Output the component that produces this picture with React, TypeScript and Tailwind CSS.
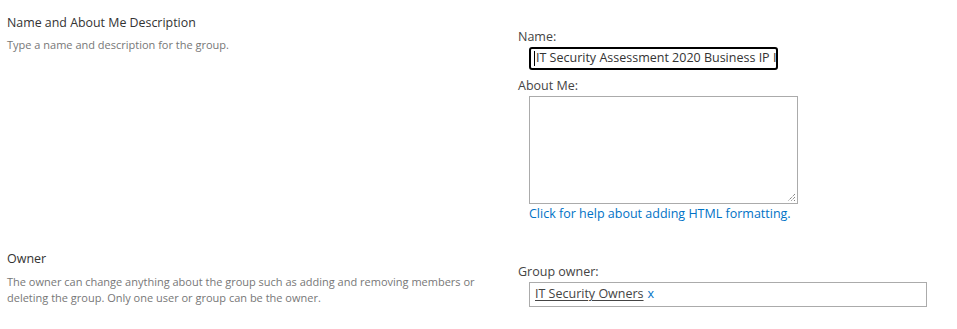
import React from "react";

function Grip() {
  return (
    <svg width="9" height="9" viewBox="0 0 9 9" className="absolute right-[1px] bottom-[1px]">
      <path d="M8 1 L1 8 M8 4 L4 8 M8 7 L7 8" stroke="#555" strokeWidth="1" strokeDasharray="1 1" fill="none" />
    </svg>
  );
}

export default function App() {
  return (
    <div className="w-[957px] h-[329px] bg-white overflow-hidden font-['Segoe_UI','Open_Sans',sans-serif] text-[#444]">
      <div className="flex">
        <div className="w-[518px] shrink-0 pl-[7px] pt-[14px]">
          <div className="text-[12.4px] leading-[18px] text-[#333]">Name and About Me Description</div>
          <div className="mt-[5px] text-[11px] leading-[16px] text-[#777]">Type a name and description for the group.</div>
        </div>
        <div className="pt-[28px]">
          <div className="text-[12.5px] leading-[18px] text-[#444]">Name:</div>
          <div className="ml-[11px] mt-[1px] w-[249px] h-[23px] border-2 border-black rounded-[3px] flex items-center overflow-hidden whitespace-nowrap pl-[3px]">
            <span className="inline-block w-[1px] h-[15px] bg-black mr-[1px] shrink-0" />
            <span className="text-[12.5px] text-[#333]">IT Security Assessment 2020 Business IP IT</span>
          </div>
          <div className="mt-[7px] text-[12.5px] leading-[18px] text-[#444]">About Me:</div>
          <div className="relative ml-[11px] mt-[1px] w-[269px] h-[108px] border border-[#ababab] bg-white">
            <Grip />
          </div>
          <div className="ml-[11px] mt-[1px] text-[12.5px] leading-[18px] text-[#0072c6]">Click for help about adding HTML formatting.</div>
        </div>
      </div>
      <div className="flex mt-[27px]">
        <div className="w-[518px] shrink-0 pl-[7px]">
          <div className="text-[12.5px] leading-[18px] text-[#333]">Owner</div>
          <div className="mt-[6px] text-[11px] leading-[16px] text-[#777]">
            <div>The owner can change anything about the group such as adding and removing members or</div>
            <div>deleting the group. Only one user or group can be the owner.</div>
          </div>
        </div>
        <div className="pt-[13px]">
          <div className="text-[12.5px] leading-[18px] text-[#444]">Group owner:</div>
          <div className="ml-[11px] mt-[1px] w-[398px] h-[25px] border border-[#ababab] flex items-center pl-[5px] text-[12.5px] whitespace-nowrap">
            <span className="text-[#444] underline underline-offset-2">IT Security Owners</span>
            <span className="ml-[4px] text-[#0072c6]">x</span>
          </div>
        </div>
      </div>
    </div>
  );
}
